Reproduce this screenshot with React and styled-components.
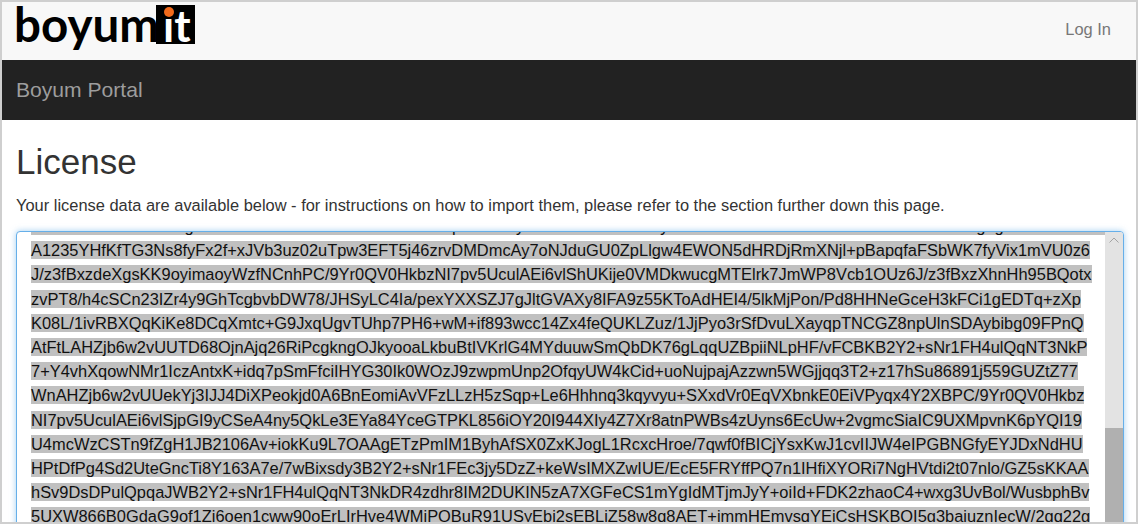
import styled, { createGlobalStyle } from 'styled-components'

const licenseLines = [
  '8kn2eh0ao7bdu3nekg15ho9dab2ku4ne6ha8/3ebo7nud1kpa4eh9oy2nbk6ud0ea3ho8ny5ak1be7dun4oh9ka2ed6bn0ouk3he8anbdghg7dneu4ka1ob5h',
  'A1235YHfKfTG3Ns8fyFx2f+xJVb3uz02uTpw3EFT5j46zrvDMDmcAy7oNJduGU0ZpLlgw4EWON5dHRDjRmXNjl+pBapqfaFSbWK7fyVix1mVU0z6',
  'J/z3fBxzdeXgsKK9oyimaoyWzfNCnhPC/9Yr0QV0HkbzNI7pv5UculAEi6vlShUKije0VMDkwucgMTElrk7JmWP8Vcb1OUz6J/z3fBxzXhnHh95BQotx',
  'zvPT8/h4cSCn23IZr4y9GhTcgbvbDW78/JHSyLC4Ia/pexYXXSZJ7gJltGVAXy8IFA9z55KToAdHEI4/5lkMjPon/Pd8HHNeGceH3kFCi1gEDTq+zXp',
  'K08L/1ivRBXQqKiKe8DCqXmtc+G9JxqUgvTUhp7PH6+wM+if893wcc14Zx4feQUKLZuz/1JjPyo3rSfDvuLXayqpTNCGZ8npUlnSDAybibg09FPnQ',
  'AtFtLAHZjb6w2vUUTD68OjnAjq26RiPcgkngOJkyooaLkbuBtIVKrlG4MYduuwSmQbDK76gLqqUZBpiiNLpHF/vFCBKB2Y2+sNr1FH4ulQqNT3NkP',
  '7+Y4vhXqowNMr1IczAntxK+idq7pSmFfciIHYG30Ik0WOzJ9zwpmUnp2OfqyUW4kCid+uoNujpajAzzwn5WGjjqq3T2+z17hSu86891j559GUZtZ77',
  'WnAHZjb6w2vUUekYj3IJJ4DiXPeokjd0A6BnEomiAvVFzLLzH5zSqp+Le6Hhhnq3kqyvyu+SXxdVr0EqVXbnkE0EiVPyqx4Y2XBPC/9Yr0QV0Hkbz',
  'NI7pv5UculAEi6vlSjpGI9yCSeA4ny5QkLe3EYa84YceGTPKL856iOY20I944XIy4Z7Xr8atnPWBs4zUyns6EcUw+2vgmcSiaIC9UXMpvnK6pYQI19',
  'U4mcWzCSTn9fZgH1JB2106Av+iokKu9L7OAAgETzPmIM1ByhAfSX0ZxKJogL1RcxcHroe/7qwf0fBICjYsxKwJ1cvIIJW4eIPGBNGfyEYJDxNdHU',
  'HPtDfPg4Sd2UteGncTi8Y163A7e/7wBixsdy3B2Y2+sNr1FEc3jy5DzZ+keWsIMXZwIUE/EcE5FRYffPQ7n1IHfiXYORi7NgHVtdi2t07nlo/GZ5sKKAA',
  'hSv9DsDPulQpqaJWB2Y2+sNr1FH4ulQqNT3NkDR4zdhr8IM2DUKIN5zA7XGFeCS1mYgIdMTjmJyY+oiId+FDK2zhaoC4+wxg3UvBol/WusbphBv',
  '5UXW866B0GdaG9of1Zi6oen1cww90oErLIrHve4WMjPOBuR91USyEbj2sEBLiZ58w8q8AET+jmmHEmvsqYEjCsHSKBQI5g3bajuznIecW/2qq22g',
]

const GlobalStyle = createGlobalStyle`
  html, body {
    margin: 0;
    padding: 0;
  }
  body {
    font-family: "Liberation Sans", Arial, sans-serif;
    font-size: 16.43px;
    color: #333;
    background: #fff;
  }
`

const Page = styled.div`
  box-sizing: border-box;
  height: 100vh;
  overflow: hidden;
  border: 2px solid #cfcfcf;
  display: flex;
  flex-direction: column;
`

const TopBar = styled.header`
  flex: 0 0 58px;
  display: flex;
  align-items: flex-start;
  justify-content: space-between;
  padding: 0 25px 0 12px;
  background: #f8f8f8;
`

const Logo = styled.div`
  display: flex;
  align-items: flex-start;
  margin-top: 3px;
`

const LogoWord = styled.span`
  width: 142px;
  font-family: Lato, sans-serif;
  font-size: 47.5px;
  font-weight: 700;
  line-height: 38px;
  color: #000;
`

const LogoMark = styled.span`
  position: relative;
  box-sizing: border-box;
  width: 39px;
  height: 39px;
  padding-left: 7px;
  font-family: Lato, sans-serif;
  font-size: 44px;
  font-weight: 700;
  line-height: 40px;
  background: #000;
  color: #fff;
`

const LogoDot = styled.span`
  position: absolute;
  top: 2px;
  left: 8px;
  width: 10px;
  height: 10px;
  border-radius: 50%;
  background: #f26a1b;
`

const LogIn = styled.a`
  margin-top: 17px;
  font-size: 16.43px;
  line-height: 20px;
  color: #777;
`

const BrandBar = styled.div`
  flex: 0 0 60px;
  display: flex;
  align-items: center;
  padding-left: 14px;
  background: #222;
  font-size: 21.1px;
  color: #9d9d9d;
`

const Content = styled.main`
  flex: 1;
  min-height: 0;
  display: flex;
  flex-direction: column;
  padding: 0 12px 0 14px;
`

const Title = styled.h1`
  margin: 22px 0 0;
  font-size: 35px;
  font-weight: 400;
  line-height: 40px;
`

const Intro = styled.p`
  margin: 11px 0 0;
  font-size: 16.43px;
  line-height: 24px;
`

const LicenseBox = styled.div`
  flex: none;
  display: flex;
  height: 400px;
  margin-top: 14px;
  overflow: hidden;
  border: 1px solid #66afe9;
  border-radius: 4px;
  box-shadow: 0 0 6px rgba(102, 175, 233, 0.6);
  background: #fff;
`

const LicenseText = styled.div`
  flex: 1;
  min-width: 0;
  overflow: hidden;
  padding-left: 14px;
  margin-top: -18px;
`

const LicenseLine = styled.div`
  font-size: 16.43px;
  line-height: 24.2px;
  white-space: nowrap;
`

const Selected = styled.span`
  background: #c0c0c0;
  color: #111;
`

const ScrollTrack = styled.div`
  position: relative;
  flex: 0 0 18px;
  background: #e3e3e3;
`

const ScrollArrow = styled.svg`
  display: block;
  margin: 5px auto 0;
`

const ScrollThumb = styled.div`
  position: absolute;
  top: 196px;
  left: 0;
  right: 0;
  bottom: 0;
  background: #b0b0b0;
`

export default function App() {
  return (
    <Page>
      <GlobalStyle />
      <TopBar>
        <Logo>
          <LogoWord>boyum</LogoWord>
          <LogoMark>
            ıt
            <LogoDot />
          </LogoMark>
        </Logo>
        <LogIn>Log In</LogIn>
      </TopBar>
      <BrandBar>Boyum Portal</BrandBar>
      <Content>
        <Title>License</Title>
        <Intro>Your license data are available below - for instructions on how to import them, please refer to the section further down this page.</Intro>
        <LicenseBox>
          <LicenseText>
            {licenseLines.map((line) => (
              <LicenseLine key={line}>
                <Selected>{line}</Selected>
              </LicenseLine>
            ))}
          </LicenseText>
          <ScrollTrack>
            <ScrollArrow width="10" height="6" viewBox="0 0 10 6">
              <path d="M0.5 5.5 L5 1 L9.5 5.5" fill="none" stroke="#a3a3a3" strokeWidth="1" />
            </ScrollArrow>
            <ScrollThumb />
          </ScrollTrack>
        </LicenseBox>
      </Content>
    </Page>
  )
}
